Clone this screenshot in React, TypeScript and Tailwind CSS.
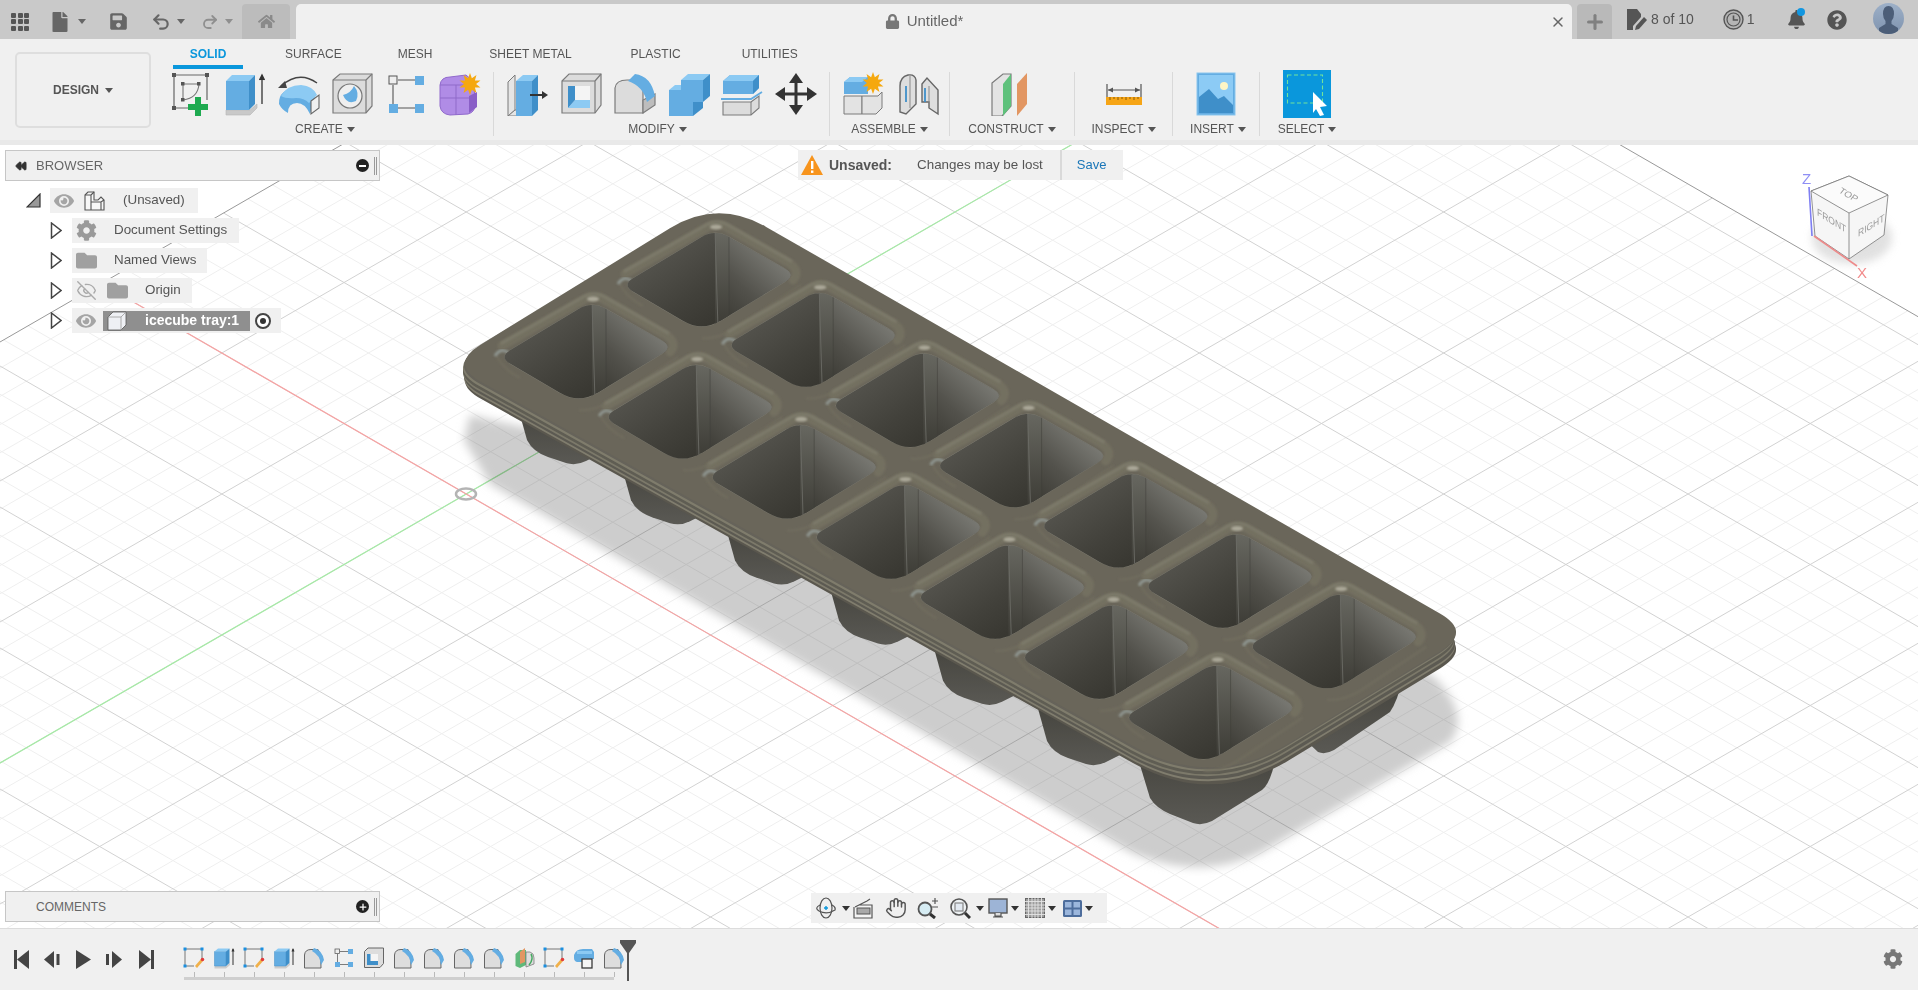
import { FaCog, FaFolder, FaEye, FaHome, FaLock, FaBell, FaQuestionCircle, FaSave, FaFile } from "react-icons/fa";
import { EyeOff, Undo2, Redo2, Hand, Plus, X, Rewind } from "lucide-react";
import type { ReactNode } from "react";

type Pt = [number, number];

const FONT = "font-['Liberation_Sans',Arial,sans-serif]";

function rounded(pts: Pt[], ds: number[]) {
  let d = "";
  pts.forEach((v, i) => {
    const prev = pts[(i + pts.length - 1) % pts.length];
    const next = pts[(i + 1) % pts.length];
    const toward = (to: Pt): Pt => {
      const len = Math.hypot(to[0] - v[0], to[1] - v[1]);
      return [v[0] + ((to[0] - v[0]) / len) * ds[i], v[1] + ((to[1] - v[1]) / len) * ds[i]];
    };
    const a = toward(prev);
    const b = toward(next);
    d += `${i === 0 ? "M" : "L"}${a[0]} ${a[1]} Q${v[0]} ${v[1]} ${b[0]} ${b[1]} `;
  });
  return d + "Z";
}

/* grid: true isometric, c+ = y + kx, c- = y - kx */
const K = 0.577;
const STEP = 28.2;
const CP_MIN = 342;
const CP_MAX = 3300;
const CM_MIN = -790;
const CM_MAX = 1000;
const pt = (cp: number, cm: number): Pt => [(cp - cm) / (2 * K), (cp + cm) / 2];

function gridLines() {
  const minor: string[] = [];
  const major: string[] = [];
  for (let n = -60; n <= 120; n++) {
    const cp = 763 + n * STEP;
    if (cp < CP_MIN - 1 || cp > CP_MAX) continue;
    const [a, b] = [pt(cp, CM_MIN), pt(cp, CM_MAX)];
    (n % 5 === 0 ? major : minor).push(`M${a[0]} ${a[1]}L${b[0]} ${b[1]}`);
  }
  for (let n = -60; n <= 60; n++) {
    const cm = 225 + n * STEP;
    if (cm < CM_MIN || cm > CM_MAX) continue;
    const [a, b] = [pt(CP_MIN, cm), pt(CP_MAX, cm)];
    (n % 5 === 0 ? major : minor).push(`M${a[0]} ${a[1]}L${b[0]} ${b[1]}`);
  }
  return { minor: minor.join(""), major: major.join("") };
}
const GRID = gridLines();

const TRAY: Pt[] = [[717.6, 199], [1472, 632], [1212, 790], [449, 364]];
const TRAY_D = [56, 37, 90, 37];
const shifted = (dy: number, dx = 0) => rounded(TRAY.map(([x, y]) => [x + dx, y + dy] as Pt), TRAY_D);
const OPENING = rounded([[0, -6], [81, 40], [-13, 97], [-93, 50]], [16, 13, 22, 13]);

const CELLS: Pt[] = [];
for (let i = 0; i < 7; i++) {
  CELLS.push([592 + i * 104.1, 307 + i * 60.1]);
  CELLS.push([715 + i * 104.2, 235 + i * 60.3]);
}

function Scene() {
  return (
    <svg className="block w-full h-full" viewBox="0 145 1918 783">
      <defs>
        <filter id="soft" x="-10%" y="-10%" width="120%" height="120%">
          <feGaussianBlur stdDeviation="5" />
        </filter>
        <filter id="soft1" x="-20%" y="-20%" width="140%" height="140%">
          <feGaussianBlur stdDeviation="1.1" />
        </filter>
        <filter id="cubeShadow" x="-30%" y="-30%" width="160%" height="160%">
          <feGaussianBlur stdDeviation="4" />
        </filter>
        <linearGradient id="wallL" gradientUnits="userSpaceOnUse" x1="-55" y1="25" x2="-5" y2="95">
          <stop offset="0" stopColor="#52514b" />
          <stop offset="0.55" stopColor="#42413b" />
          <stop offset="1" stopColor="#373630" />
        </linearGradient>
        <linearGradient id="wallR" gradientUnits="userSpaceOnUse" x1="65" y1="25" x2="5" y2="90">
          <stop offset="0" stopColor="#7a7a74" />
          <stop offset="0.5" stopColor="#53524c" />
          <stop offset="1" stopColor="#373630" />
        </linearGradient>
        <linearGradient id="fold" gradientUnits="userSpaceOnUse" x1="0" y1="0" x2="0" y2="90">
          <stop offset="0" stopColor="#66665f" />
          <stop offset="1" stopColor="#3d3c36" />
        </linearGradient>
        <linearGradient id="leg" x1="0" y1="0" x2="0" y2="1">
          <stop offset="0" stopColor="#45443e" />
          <stop offset="1" stopColor="#5a5954" />
        </linearGradient>
        <clipPath id="hole">
          <path d={OPENING} />
        </clipPath>
        <g id="cell">
          <path d="M-90 39 L-7 -8 Q2 -13 11 -8 L74 28 Q86 36 78 45" fill="none" stroke="#736f60" strokeWidth="9" strokeLinecap="round" filter="url(#soft1)" />
          <path d="M-90 36 L-7 -11 Q2 -15 11 -11 L76 26" fill="none" stroke="#7d7a6b" strokeWidth="3" strokeLinecap="round" filter="url(#soft1)" />
          <path d="M-96 48 Q-89 62 -72 71 M-13 103 Q0 105 20 94 L86 50" fill="none" stroke="#716d5e" strokeWidth="2" filter="url(#soft1)" />
          <ellipse cx="1" cy="-8" rx="6" ry="2.4" fill="#aba899" filter="url(#soft1)" />
          <path d="M-97 49 Q-92 40 -83 46" fill="none" stroke="#8e948f" strokeWidth="3" filter="url(#soft1)" />
          <path d={OPENING} fill="#3f3e39" stroke="#807f75" strokeWidth="0.8" />
          <g clipPath="url(#hole)">
            <polygon points="-100,50 0,-8 2,110 -30,110" fill="url(#wallL)" />
            <polygon points="10,-8 90,40 90,110 4,110" fill="url(#wallR)" />
            <rect x="0" y="-8" width="14" height="110" fill="url(#fold)" />
            <path d="M0 -6 L3 94" stroke="#6b6b65" strokeWidth="0.9" />
            <path d="M14 0 L14 90" stroke="#3f3e39" strokeWidth="1" opacity="0.5" />
          </g>
        </g>
        <path id="legS" d="M517 404 L527 440 Q533 452 548 457 L566 463 Q576 466 586 461 L600 454 L600 430 Z" fill="url(#leg)" />
      </defs>

      {/* grid and axes */}
      <path d={GRID.minor} stroke="#efefef" strokeWidth="1" fill="none" />
      <path d={GRID.major} stroke="#d2d2d2" strokeWidth="1" fill="none" />
      <line x1={pt(CP_MIN, CM_MIN)[0]} y1={pt(CP_MIN, CM_MIN)[1]} x2={pt(CP_MIN, CM_MAX)[0]} y2={pt(CP_MIN, CM_MAX)[1]} stroke="#999" />
      <line x1={pt(CP_MIN, CM_MIN)[0]} y1={pt(CP_MIN, CM_MIN)[1]} x2={pt(CP_MAX, CM_MIN)[0]} y2={pt(CP_MAX, CM_MIN)[1]} stroke="#999" />
      <line x1={pt(763, CM_MIN)[0]} y1={pt(763, CM_MIN)[1]} x2={pt(763, CM_MAX)[0]} y2={pt(763, CM_MAX)[1]} stroke="#a6eaa6" strokeWidth="1.2" />
      <line x1={pt(CP_MIN, 225)[0]} y1={pt(CP_MIN, 225)[1]} x2={pt(CP_MAX, 225)[0]} y2={pt(CP_MAX, 225)[1]} stroke="#f6a3a3" strokeWidth="1.2" />
      <ellipse cx="466" cy="494" rx="10" ry="5.5" fill="none" stroke="#b4b4b4" strokeWidth="2.5" />

      {/* ground shadow */}
      <path className="mix-blend-multiply" d="M470 415 L464 440 L490 484 L1130 852 Q1200 882 1262 852 L1450 742 Q1472 715 1432 675 L1100 560 Z" fill="#cdcdcd" filter="url(#soft)" />

      {/* legs */}
      <path d="M1300 735 L1318 752 Q1325 755 1334 750 L1390 712 Q1398 700 1402 680 Z" fill="url(#leg)" />
      {[0, 1, 2, 3, 4, 5].map((i) => (
        <use key={i} href="#legS" x={i * 104} y={i * 60.2} />
      ))}
      <path d="M1140 765 L1150 798 Q1156 808 1170 814 L1193 823 Q1202 826 1212 821 L1262 790 Q1272 782 1277 750 Z" fill="url(#leg)" />

      {/* rim layers */}
      <path d={shifted(17, 0)} fill="#5a574e" />
      <path d={shifted(14, -1)} fill="#807d6e" />
      <path d={shifted(12, -1)} fill="#5c5a52" />
      <path d={shifted(9, -2)} fill="#7c796a" />
      <path d={shifted(7, -2)} fill="#5f5d53" />
      <path d={shifted(4, -2)} fill="#7f7c6c" />
      <path d={shifted(2, -1)} fill="#66635a" />
      <path d={shifted(0)} fill="#6a665a" />

      {CELLS.map(([x, y], i) => (
        <use key={i} href="#cell" x={x} y={y} />
      ))}

      {/* view cube */}
      <ellipse cx="1852" cy="238" rx="40" ry="26" fill="#d4d4d4" opacity="0.7" filter="url(#cubeShadow)" />
      <polygon points="1849,176 1888,195 1884,235 1849,259 1815,236 1811,191" fill="#f6f6f6" stroke="#777" strokeWidth="0.8" />
      <polygon points="1849,176 1888,195 1849,213 1811,191" fill="#fbfbfb" stroke="#777" strokeWidth="0.8" />
      <line x1="1849" y1="213" x2="1849" y2="259" stroke="#777" strokeWidth="0.8" />
      <g fontFamily="'Liberation Sans',Arial,sans-serif" fill="#9a9a9a" fontSize="10">
        <text transform="matrix(0.85 0.5 -0.55 0.7 1838 192)">TOP</text>
        <text transform="matrix(0.85 0.52 0 1 1817 215)">FRONT</text>
        <text transform="matrix(0.85 -0.52 0 1 1858 237)">RIGHT</text>
      </g>
      <line x1="1809" y1="187" x2="1812" y2="236" stroke="#7f7ff2" strokeWidth="1.6" />
      <line x1="1814" y1="236" x2="1857" y2="266" stroke="#ee8a8a" strokeWidth="1.6" />
      <text x="1802" y="184" fontFamily="'Liberation Sans',Arial,sans-serif" fontSize="15" fill="#8f8ff5">Z</text>
      <text x="1857" y="278" fontFamily="'Liberation Sans',Arial,sans-serif" fontSize="15" fill="#f28b8b">X</text>
    </svg>
  );
}

/* ribbon icons */
function Ico({ children }: { children: ReactNode }) {
  return (
    <svg width="44" height="44" viewBox="0 0 44 44" className="shrink-0">
      {children}
    </svg>
  );
}

const STROKE = "#7b7b7b";
const BLUE = "#64ade2";
const BLUE_D = "#3f8fc9";
const BLUE_L = "#8ccaf3";
const GRAY = "#dcdcdc";

const SketchNew = () => (
  <Ico>
    <path d="M4 3H37V28M4 3V36H26" fill="none" stroke="#666" strokeWidth="1.2" />
    {[[2, 1], [35, 1], [2, 34]].map(([x, y]) => <rect key={x * 100 + y} x={x} y={y} width="4" height="4" fill="#555" />)}
    <path d="M13 12H29M13 12V28M29 12Q28 26 13 28" fill="none" stroke="#777" strokeWidth="1.1" />
    {[[11, 10], [27, 10], [11, 26]].map(([x, y]) => <rect key={x * 100 + y} x={x} y={y} width="3.5" height="3.5" fill="#555" />)}
    <path d="M31 25v7h7v6h-7v6h-6v-6h-7v-6h7v-7z" fill="#1eaa50" />
  </Ico>
);
const Extrude = () => (
  <Ico>
    <polygon points="2,38 26,38 33,32 33,36 26,43 2,43" fill="#c9c9c9" stroke="#b5b5b5" strokeWidth="0.6" />
    <polygon points="2,9 25,9 25,38 2,38" fill={BLUE} />
    <polygon points="2,9 8,3 31,3 25,9" fill={BLUE_L} />
    <polygon points="25,9 31,3 31,32 25,38" fill={BLUE_D} />
    <path d="M38 32V4M35.5 8L38 3L40.5 8" stroke="#333" strokeWidth="1.3" fill="#333" />
  </Ico>
);
const Revolve = () => (
  <Ico>
    <path d="M4 14Q22 -2 40 11" fill="none" stroke="#444" strokeWidth="1.5" />
    <polygon points="1,16 8,9 10,16" fill="#444" />
    <path d="M2 32Q1 17 22 15Q35 15 38 24L33 42Q28 31 20 31Q11 31 11 41Q5 38 2 32Z" fill={BLUE} />
    <path d="M4 24Q10 13 24 13Q36 14 40 23L32 31Q27 26 19 26Q9 27 4 24Z" fill={BLUE_L} />
    <polygon points="34,29 42,23 42,36 34,42" fill="#f0f0f0" stroke="#666" strokeWidth="1.1" />
  </Ico>
);
const Hole = () => (
  <Ico>
    <polygon points="2,8 9,2 41,2 41,34 35,41 2,41" fill={GRAY} stroke={STROKE} strokeWidth="1.2" />
    <path d="M2 8H35V41M35 8L41 2" fill="none" stroke={STROKE} strokeWidth="1.2" />
    <circle cx="19" cy="24" r="12" fill="#efefef" stroke="#777" strokeWidth="1.2" />
    <path d="M12 23Q20 21 23 14Q29 21 25 29Q16 33 12 23Z" fill={BLUE} />
  </Ico>
);
const Pattern = () => (
  <Ico>
    <rect x="4" y="4" width="8" height="8" fill="#eee" stroke="#555" />
    <rect x="30" y="4" width="9" height="9" fill={BLUE} />
    <rect x="4" y="32" width="9" height="9" fill={BLUE} />
    <rect x="30" y="32" width="9" height="9" fill={BLUE} />
    <path d="M13 8H30M8 13V32M13 36H30" stroke="#555" strokeWidth="1.1" />
  </Ico>
);
const Star = ({ cx, cy, r }: { cx: number; cy: number; r: number }) => {
  const pts = Array.from({ length: 20 }, (_, i) => {
    const rad = i % 2 === 0 ? r : r * 0.55;
    const a = (i * Math.PI) / 10;
    return `${cx + rad * Math.sin(a)},${cy - rad * Math.cos(a)}`;
  }).join(" ");
  return <polygon points={pts} fill="#f5a80e" />;
};
const BoxNew = () => (
  <Ico>
    <path d="M2 13Q3 5 12 5L28 3L36 10L37 33Q37 40 30 42L12 43Q3 42 2 34Z" fill="#b08ce6" stroke="#9069cc" strokeWidth="1" />
    <path d="M2 13H33M2 26H37M18 13V43" stroke="#8f6ac9" strokeWidth="1" fill="none" />
    <path d="M31 24L39 20V35L31 41Z" fill="#8a5fc7" />
    <Star cx={32} cy={12} r={11} />
  </Ico>
);
const PressPull = () => (
  <Ico>
    <polygon points="2,10 9,3 9,38 2,44" fill="#e5e5e5" stroke={STROKE} />
    <polygon points="2,44 9,38 14,38 14,44" fill="#e5e5e5" stroke={STROKE} />
    <polygon points="10,9 26,9 26,44 10,44" fill={BLUE} />
    <polygon points="10,9 17,3 32,3 26,9" fill={BLUE_L} />
    <polygon points="26,9 32,3 32,38 26,44" fill={BLUE_D} />
    <path d="M24 23H38" stroke="#333" strokeWidth="2" />
    <polygon points="36,19 42,23 36,27" fill="#333" />
  </Ico>
);
const Shell = () => (
  <Ico>
    <polygon points="2,9 9,2 41,2 41,33 35,41 2,41" fill={GRAY} stroke={STROKE} strokeWidth="1.2" />
    <path d="M2 9H35V41M35 9L41 2" fill="none" stroke={STROKE} strokeWidth="1.2" />
    <rect x="8" y="14" width="22" height="22" fill="#f4f4f4" />
    <polygon points="8,36 15,28 30,28 30,36" fill={BLUE_L} />
    <polygon points="8,14 15,14 15,28 8,36" fill={BLUE_D} />
  </Ico>
);
const Fillet = () => (
  <Ico>
    <path d="M2 41V16Q3 8 14 8H30V41Z" fill={GRAY} stroke={STROKE} strokeWidth="1.2" />
    <polygon points="30,41 42,33 42,22 30,28" fill="#bdbdbd" stroke={STROKE} strokeWidth="1.2" />
    <path d="M22 2Q38 4 42 24L34 30Q30 14 15 9Z" fill={BLUE} />
  </Ico>
);
const Combine = () => (
  <Ico>
    <polygon points="14,8 36,8 36,30 14,30" fill={BLUE} />
    <polygon points="14,8 21,2 43,2 36,8" fill={BLUE_L} />
    <polygon points="36,8 43,2 43,24 36,30" fill={BLUE_D} />
    <polygon points="2,18 26,18 26,44 2,44" fill={BLUE} />
    <polygon points="2,18 8,13 14,13 14,18" fill={BLUE_L} />
    <polygon points="26,30 36,30 36,36 26,44" fill={BLUE_D} />
  </Ico>
);
const SplitBody = () => (
  <Ico>
    <polygon points="2,9 9,3 38,3 38,16 32,22 2,22" fill={BLUE} />
    <polygon points="2,9 9,3 38,3 32,9" fill={BLUE_L} />
    <polygon points="32,9 38,3 38,16 32,22" fill={BLUE_D} />
    <path d="M0 27H30L41 20" stroke={BLUE} strokeWidth="1.8" fill="none" />
    <path d="M2 30H30L38 24V36L30 43H2Z" fill={GRAY} stroke={STROKE} strokeWidth="1.1" />
    <path d="M30 30V43" stroke={STROKE} />
  </Ico>
);
const MoveIco = () => (
  <Ico>
    <path d="M22 8V36M8 22H36" stroke="#333" strokeWidth="3" />
    <polygon points="22,1 29,11 15,11" fill="#333" />
    <polygon points="22,43 29,33 15,33" fill="#333" />
    <polygon points="1,22 11,15 11,29" fill="#333" />
    <polygon points="43,22 33,15 33,29" fill="#333" />
  </Ico>
);
const Assemble = () => (
  <Ico>
    <polygon points="2,10 8,5 26,5 26,22 2,22" fill={BLUE} />
    <polygon points="2,10 8,5 26,5 20,10" fill={BLUE_L} />
    <polygon points="2,24 20,24 20,42 2,42" fill="#e3e3e3" stroke={STROKE} />
    <polygon points="20,24 36,24 40,20 40,36 34,42 20,42" fill="#e3e3e3" stroke={STROKE} />
    <Star cx={31} cy={11} r={11} />
  </Ico>
);
const Joint = () => (
  <Ico>
    <path d="M4 40V14Q4 5 12 3Q19 2 20 8V32L10 42Z" fill="#dedede" stroke="#666" strokeWidth="1.4" />
    <path d="M14 4V36" stroke="#8a8a8a" />
    <path d="M26 12L31 6L42 18V42L33 36V30L26 30Z" fill="#dedede" stroke="#666" strokeWidth="1.4" />
    <path d="M33 14V36" stroke="#8a8a8a" />
    <path d="M10 14V30M29 16V30" stroke={BLUE_D} strokeWidth="1.8" />
  </Ico>
);
const Construct = () => (
  <Ico>
    <polygon points="2,11 13,2 21,2 21,34 12,44 2,44" fill="#e3e3e3" stroke={STROKE} strokeWidth="1.2" />
    <polygon points="13,12 21,2 21,34 13,44" fill="#5ec17b" />
    <polygon points="27,12 37,1 37,32 27,44" fill="#e29662" />
  </Ico>
);
const Inspect = () => (
  <svg width="36" height="22" viewBox="0 0 36 22" className="shrink-0">
    <path d="M1 1V14M35 1V14M2 7H34" stroke="#555" strokeWidth="1.2" fill="none" />
    <polygon points="2,7 7,4.500 7,9.500" fill="#555" />
    <polygon points="34,7 29,4.500 29,9.500" fill="#555" />
    <rect x="0" y="14" width="36" height="8" fill="#f6a516" />
    <path d="M4 14v3M8 14v2M12 14v3M16 14v2M20 14v3M24 14v2M28 14v3M32 14v2" stroke="#8a5a05" />
  </svg>
);
const Insert = () => (
  <Ico>
    <rect x="3" y="1" width="38" height="42" fill={BLUE} stroke="#8ac6ee" />
    <rect x="5" y="3" width="34" height="38" fill="#8ccbf5" />
    <circle cx="30" cy="14" r="4" fill="#fdf5c5" />
    <path d="M5 36V25L15 17L24 27L30 24L39 33V41H5Z" fill={BLUE_D} />
  </Ico>
);
const SelectIco = () => (
  <svg width="48" height="48" viewBox="0 0 48 48" className="shrink-0">
    <rect width="48" height="48" fill="#0a97dc" />
    <rect x="4.5" y="5" width="35" height="28" fill="none" stroke="#72e39a" strokeWidth="1.1" strokeDasharray="4 2.5" />
    <polygon points="30,22 44,36 37,37 41,45 37,46 33,39 30,43" fill="#fff" />
  </svg>
);

const Caret = ({ c = "#555" }: { c?: string }) => (
  <svg width="8" height="5" viewBox="0 0 8 5" className="shrink-0">
    <polygon points="0,0 8,0 4,5" fill={c} />
  </svg>
);

function Group({ w, icons, label, labelPad = "" }: { w: string; icons: ReactNode; label: string; labelPad?: string }) {
  return (
    <div className={`${w} flex flex-col shrink-0`}>
      <div className="h-[48px] flex items-center justify-center">{icons}</div>
      <div className={`mt-[4px] h-[14px] flex items-center justify-center gap-[4px] text-[12px] text-[#555] ${labelPad}`}>
        {label}
        <Caret />
      </div>
    </div>
  );
}

const Cell = ({ children }: { children: ReactNode }) => (
  <div className="w-[53.7px] flex justify-center shrink-0">{children}</div>
);
const Sep = () => <div className="w-px h-[64px] mt-[2px] bg-[#d9d9d9] shrink-0" />;

function Triangle({ open = false }: { open?: boolean }) {
  return open ? (
    <svg width="15" height="15" viewBox="0 0 15 15">
      <polygon points="1,14 14,14 14,1" fill="#999" stroke="#333" strokeWidth="1.2" />
    </svg>
  ) : (
    <svg width="12" height="17" viewBox="0 0 12 17">
      <polygon points="1.5,1 11,8.5 1.5,16" fill="#fff" stroke="#444" strokeWidth="1.5" />
    </svg>
  );
}

const CompIcon = () => (
  <svg width="21" height="20" viewBox="0 0 21 20">
    <path d="M1 4L4 1H10V9H14L17 6L20 9V19H1Z" fill="#f7f7f7" stroke="#555" strokeWidth="1.1" />
    <path d="M1 4H7V19M7 4L10 1M7 11H17L20 9M17 11V19" fill="none" stroke="#555" strokeWidth="1.1" />
  </svg>
);
const CubeIcon = () => (
  <svg width="20" height="20" viewBox="0 0 20 20">
    <polygon points="1,6 6,1 19,1 19,14 14,19 1,19" fill="#eef0f4" stroke="#555" strokeWidth="0.8" />
    <path d="M1 6H14V19M14 6L19 1" fill="none" stroke="#999" strokeWidth="0.8" />
  </svg>
);
const DocEdit = () => (
  <svg width="20" height="21" viewBox="0 0 20 21" className="ml-[15px] self-center -mt-[4px] shrink-0">
    <path d="M0 0H10L14 5V8L6 17V21H0Z" fill="#555" />
    <path d="M9 17L17 8L20 11L12 20L8 21Z" fill="#555" />
  </svg>
);

function Chip({ ml, children }: { ml: string; children: ReactNode }) {
  return <div className={`${ml} h-[25px] flex items-center bg-[#f0f0f0] text-[13.4px] text-[#555]`}>{children}</div>;
}

function PanelHead({ title, plus, chevrons }: { title: string; plus?: boolean; chevrons?: boolean }) {
  return (
    <div className="w-[375px] h-[31px] flex items-center border border-[#c6c6c6] bg-[#f0f0f0] text-[#666]">
      <div className="w-[30px] flex justify-center">{chevrons && <Rewind size={12} fill="#333" stroke="#333" />}</div>
      <span className={title === "BROWSER" ? "text-[13px]" : "text-[12px]"}>{title}</span>
      <span className="ml-auto mr-[5px] w-[13px] h-[13px] rounded-full bg-[#222] flex items-center justify-center">
        {plus ? <Plus size={10} strokeWidth={3} color="#fff" /> : <span className="w-[7px] h-[2px] bg-white" />}
      </span>
      <span className="mr-[2px] w-[3px] h-[18px] border-x border-[#999]" />
    </div>
  );
}

/* timeline glyphs */
const Mini = ({ c }: { c: ReactNode }) => (
  <div className="w-[30px] h-[22px] flex justify-center items-center">
    <svg width="22" height="22" viewBox="0 0 44 44">{c}</svg>
  </div>
);
const mSketch = (
  <>
    <path d="M4 4H38V24M4 4V38H22" fill="none" stroke="#777" strokeWidth="2" />
    {[[1, 1], [35, 1], [1, 35]].map(([x, y]) => <rect key={x * 100 + y} x={x} y={y} width="6" height="6" fill="#1b8fe0" />)}
    <path d="M24 38L36 24L40 28L28 42Z" fill="#f0b04a" />
    <circle cx="39" cy="25" r="3.5" fill="#e23b3b" />
  </>
);
const mExtrude = (
  <>
    <polygon points="3,38 26,38 34,32 34,36 26,43 3,43" fill="#ccc" />
    <polygon points="3,9 26,9 26,38 3,38" fill={BLUE} stroke={BLUE_D} />
    <polygon points="3,9 10,3 33,3 26,9" fill={BLUE_L} />
    <polygon points="26,9 33,3 33,32 26,38" fill={BLUE_D} />
    <path d="M40 36V4" stroke="#333" strokeWidth="2" />
    <polygon points="37,9 40,2 43,9" fill="#333" />
  </>
);
const mFillet = (
  <>
    <path d="M3 42V16Q4 5 16 5H30Q36 14 36 42Z" fill="#ddd" stroke="#666" strokeWidth="2" />
    <path d="M22 2Q38 6 42 26L36 36Q34 16 18 8Z" fill={BLUE} />
  </>
);
const mPattern = (
  <>
    <rect x="4" y="4" width="9" height="9" fill="#eee" stroke="#555" strokeWidth="1.5" />
    <rect x="30" y="4" width="10" height="10" fill={BLUE} />
    <rect x="4" y="30" width="10" height="10" fill={BLUE} />
    <rect x="30" y="30" width="10" height="10" fill={BLUE} />
    <path d="M14 9H30M9 14V30M14 35H30" stroke="#555" strokeWidth="1.5" />
  </>
);
const mShell = (
  <>
    <polygon points="3,9 10,2 41,2 41,33 34,41 3,41" fill="#ddd" stroke="#666" strokeWidth="2" />
    <rect x="8" y="14" width="22" height="22" fill="#f5f5f5" />
    <polygon points="8,14 15,14 15,28 30,28 30,36 8,36" fill={BLUE_D} />
  </>
);
const mPlane = (
  <>
    <path d="M5 38V14L14 6H26V36L14 42Z" fill="#4fb26d" opacity="0.9" />
    <path d="M14 34V10L24 2V30Z" fill="#e29662" />
    <path d="M26 10H34Q42 12 42 22V34L26 40Z" fill="#ddd" stroke="#777" strokeWidth="1.5" />
    <path d="M36 14Q42 24 32 36" fill="none" stroke="#43a95f" strokeWidth="3" />
  </>
);
const mSplit = (
  <>
    <path d="M2 16Q6 4 20 4H38L42 10V24H24V30H8Q2 28 2 22Z" fill={BLUE} />
    <path d="M8 8H38V14H8Z" fill={BLUE_L} />
    <rect x="18" y="24" width="20" height="18" fill="#f5f5f5" stroke="#333" strokeWidth="2.5" />
  </>
);
const TIMELINE = [mSketch, mExtrude, mSketch, mExtrude, mFillet, mPattern, mShell, mFillet, mFillet, mFillet, mFillet, mPlane, mSketch, mSplit, mFillet];

/* navigation bar glyphs */
const Orbit = () => (
  <svg width="21" height="22" viewBox="0 0 21 22">
    <ellipse cx="11" cy="11" rx="6" ry="10" fill="none" stroke="#555" strokeWidth="1.2" />
    <path d="M5 8Q-1 11 4 14Q12 18 20 13Q21 10 17 8" fill="none" stroke="#555" strokeWidth="1.2" />
    <path d="M9 11h4M11 9v4" stroke="#0a97dc" strokeWidth="1.4" />
  </svg>
);
const Capture = () => (
  <svg width="21" height="21" viewBox="0 0 21 21">
    <path d="M2 9L14 3L17 1M6 7H19V20H1V9" fill="#f4f4f4" stroke="#555" strokeWidth="1.2" />
    <rect x="4" y="10" width="13" height="6" fill="#a9a9a9" stroke="#555" strokeWidth="1" />
  </svg>
);
const ZoomPm = () => (
  <svg width="22" height="22" viewBox="0 0 22 22">
    <circle cx="8" cy="12" r="6.5" fill="#d6ecf3" stroke="#555" strokeWidth="1.8" />
    <path d="M13 17L18 21" stroke="#333" strokeWidth="3" />
    <path d="M15 4h6M18 1v6M15 10h6" stroke="#555" strokeWidth="1.2" />
  </svg>
);
const ZoomFit = () => (
  <svg width="21" height="21" viewBox="0 0 21 21">
    <circle cx="9" cy="9" r="8" fill="#eef2f4" stroke="#555" strokeWidth="1.6" />
    <rect x="5" y="5" width="8" height="8" fill="#e3eaf2" stroke="#888" strokeWidth="1.2" />
    <path d="M15 15L20 20" stroke="#333" strokeWidth="3" />
  </svg>
);
const Display = () => (
  <svg width="20" height="20" viewBox="0 0 20 20">
    <rect x="1" y="1" width="18" height="14" fill="#9db4d6" stroke="#555" strokeWidth="1.4" />
    <path d="M7 15V18H13V15M5 19H15" stroke="#555" strokeWidth="1.2" fill="#ddd" />
  </svg>
);
const GridIco = () => (
  <svg width="20" height="20" viewBox="0 0 20 20">
    <rect x="0.5" y="0.5" width="19" height="19" fill="#9c9c9c" stroke="#666" />
    <path d="M3.5 0V20M7 0V20M10 0V20M13 0V20M16.5 0V20M0 3.5H20M0 7H20M0 10H20M0 13H20M0 16.5H20" stroke="#e4e4e4" strokeWidth="0.9" />
  </svg>
);
const Views = () => (
  <svg width="19" height="17" viewBox="0 0 19 17">
    <rect width="19" height="17" rx="1.5" fill="#4d6d9c" />
    <rect x="2" y="2" width="6.5" height="5.5" fill="#9bb6dc" />
    <rect x="10.5" y="2" width="6.5" height="5.5" fill="#9bb6dc" />
    <rect x="2" y="9.5" width="6.5" height="5.5" fill="#9bb6dc" />
    <rect x="10.5" y="9.5" width="6.5" height="5.5" fill="#9bb6dc" />
  </svg>
);

export default function App() {
  return (
    <div className={`${FONT} w-[1918px] h-[990px] flex flex-col overflow-hidden bg-white text-[#555]`}>
      {/* title bar */}
      <div className="h-[39px] pt-[4px] flex items-stretch bg-[#c9c9c9] shrink-0">
        <div className="ml-[11px] w-[18px] self-center grid grid-cols-3 gap-[1.5px]">
          {Array.from({ length: 9 }, (_, i) => <span key={i} className="h-[5px] bg-[#555] rounded-[1px]" />)}
        </div>
        <FaFile size={20} color="#666" className="ml-[21px] self-center" />
        <span className="ml-[8px] self-center"><Caret c="#666" /></span>
        <FaSave size={19} color="#666" className="ml-[23px] self-center" />
        <Undo2 size={20} color="#666" strokeWidth={2.6} className="ml-[23px] self-center" />
        <span className="ml-[6px] self-center"><Caret c="#666" /></span>
        <Redo2 size={18} color="#8f8f8f" strokeWidth={2.4} className="ml-[16px] self-center" />
        <span className="ml-[6px] self-center"><Caret c="#8f8f8f" /></span>
        <div className="ml-[9px] w-[48px] bg-[#bcbcbc] rounded-t-[4px] flex items-center justify-center">
          <FaHome size={17} color="#8a8a8a" />
        </div>
        <div className="ml-[6px] w-[1276px] bg-[#f0f0f0] rounded-t-[5px] flex items-center">
          <div className="flex-1 pl-[2px] flex items-center justify-center gap-[7px]">
            <FaLock size={15} color="#777" />
            <span className="text-[15px] text-[#666]">Untitled*</span>
          </div>
          <X size={16} color="#666" strokeWidth={2.2} className="mr-[6px]" />
        </div>
        <div className="ml-[5px] w-[35px] bg-[#b9b9b9] rounded-t-[4px] flex items-center justify-center">
          <Plus size={22} color="#808080" strokeWidth={3.4} />
        </div>
        <DocEdit />
        <span className="ml-[4px] self-center -mt-[4px] text-[14px]">8 of 10</span>
        <svg width="21" height="21" viewBox="0 0 21 21" className="ml-[29px] self-center -mt-[4px]">
          <circle cx="10.5" cy="10.5" r="9.5" fill="#b5b5b5" stroke="#555" strokeWidth="1.4" />
          <circle cx="10.5" cy="10.5" r="6.5" fill="none" stroke="#555" strokeWidth="1.2" />
          <path d="M10.5 6.5V11H15" fill="none" stroke="#555" strokeWidth="1.6" />
        </svg>
        <span className="ml-[3px] self-center -mt-[4px] text-[14px]">1</span>
        <span className="ml-[32px] self-center -mt-[4px] relative">
          <FaBell size={19} color="#555" />
          <span className="absolute -top-[2px] left-[10px] w-[8px] h-[8px] rounded-full bg-[#1296e0]" />
        </span>
        <FaQuestionCircle size={20} color="#555" className="ml-[21px] self-center -mt-[4px]" />
        <div className="ml-[26px] w-[31px] h-[31px] -mt-[1px] rounded-full bg-gradient-to-b from-[#9db0c8] to-[#7f93ae] overflow-hidden flex justify-center">
          <svg width="31" height="31" viewBox="0 0 31 31">
            <path d="M10 11Q10 3 15.5 3Q21 3 21 11Q21 15 18.5 18V21L25 25V31H6V25L12.500 21V18Q10 15 10 11Z" fill="#4c5e78" />
          </svg>
        </div>
      </div>

      {/* ribbon */}
      <div className="h-[106px] flex bg-[#f0f0f0] border-b-[5px] border-[#e9e9e9] shrink-0">
        <div className="ml-[15px] mt-[13px] w-[136px] h-[76px] border-2 border-[#dedede] rounded-[5px] flex items-center justify-center gap-[6px] text-[12px] font-bold text-[#555]">
          DESIGN
          <Caret />
        </div>
        <div className="ml-[14px] flex-1 flex flex-col">
          <div className="relative h-[31px] text-[12px] text-[#555]">
            <div className="flex items-center h-[28px] pt-[1px]">
              <div className="w-[70px] ml-[8px] text-center text-[#0a97dc] font-bold">SOLID</div>
              <div className="ml-[42px]">SURFACE</div>
              <div className="ml-[56px]">MESH</div>
              <div className="ml-[57px]">SHEET METAL</div>
              <div className="ml-[59px]">PLASTIC</div>
              <div className="ml-[61px]">UTILITIES</div>
            </div>
            <div className="ml-[8px] w-[70px] h-[4px] -mt-[2px] bg-[#0a97dc]" />
          </div>
          <div className="flex">
            <Group
              w="w-[328px]"
              labelPad="pr-[8px]"
              label="CREATE"
              icons={<div className="flex w-full"><Cell><SketchNew /></Cell><Cell><Extrude /></Cell><Cell><Revolve /></Cell><Cell><Hole /></Cell><Cell><Pattern /></Cell><Cell><BoxNew /></Cell></div>}
            />
            <Sep />
            <Group
              w="w-[335px]"
              label="MODIFY"
              labelPad="pr-[8px]"
              icons={<div className="flex w-full pl-[7px]"><Cell><PressPull /></Cell><Cell><Shell /></Cell><Cell><Fillet /></Cell><Cell><Combine /></Cell><Cell><SplitBody /></Cell><Cell><MoveIco /></Cell></div>}
            />
            <Sep />
            <Group
              w="w-[119px]"
              label="ASSEMBLE"
              icons={<div className="flex w-full pl-[7px]"><Cell><Assemble /></Cell><Cell><Joint /></Cell></div>}
            />
            <Sep />
            <Group w="w-[124px]" label="CONSTRUCT" icons={<Construct />} />
            <Sep />
            <Group w="w-[97px]" label="INSPECT" icons={<Inspect />} />
            <Sep />
            <Group w="w-[86px]" labelPad="pl-[4px]" label="INSERT" icons={<Insert />} />
            <Sep />
            <Group w="w-[94px]" label="SELECT" icons={<SelectIco />} />
          </div>
        </div>
      </div>

      {/* canvas */}
      <div className="relative flex-1 min-h-0 overflow-hidden">
        <Scene />

        <div className="absolute left-[5px] top-[5px] flex flex-col gap-[5px]">
          <div className="mb-[2px]"><PanelHead title="BROWSER" chevrons /></div>
          <div className="flex items-center">
            <span className="ml-[21px] flex"><Triangle open /></span>
            <Chip ml="ml-[9px]">
              <FaEye size={20} color="#a5a5a5" className="ml-[4px]" />
              <span className="ml-[10px] flex"><CompIcon /></span>
              <span className="ml-[18px] mr-[13px]">(Unsaved)</span>
            </Chip>
          </div>
          <div className="flex items-center">
            <span className="ml-[45px] flex"><Triangle /></span>
            <Chip ml="ml-[10px]">
              <FaCog size={21} color="#9a9a9a" className="ml-[4px]" />
              <span className="ml-[17px] mr-[12px]">Document Settings</span>
            </Chip>
          </div>
          <div className="flex items-center">
            <span className="ml-[45px] flex"><Triangle /></span>
            <Chip ml="ml-[10px]">
              <FaFolder size={21} color="#a0a0a0" className="ml-[4px]" />
              <span className="ml-[17px] mr-[11px]">Named Views</span>
            </Chip>
          </div>
          <div className="flex items-center">
            <span className="ml-[45px] flex"><Triangle /></span>
            <Chip ml="ml-[10px]">
              <EyeOff size={21} color="#aaa" strokeWidth={1.6} className="ml-[4px]" />
              <FaFolder size={21} color="#a0a0a0" className="ml-[10px]" />
              <span className="ml-[17px] mr-[11px]">Origin</span>
            </Chip>
          </div>
          <div className="flex items-center">
            <span className="ml-[45px] flex"><Triangle /></span>
            <Chip ml="ml-[10px]">
              <FaEye size={20} color="#a5a5a5" className="ml-[4px]" />
              <div className="ml-[7px] w-[147px] h-[20px] flex items-center bg-[#8f8f8f] text-white font-bold text-[14px]">
                <span className="ml-[4px] flex"><CubeIcon /></span>
                <span className="ml-[18px] whitespace-nowrap">icecube tray:1</span>
              </div>
              <span className="ml-[5px] mr-[10px] w-[16px] h-[16px] rounded-full border-2 border-[#444] bg-white flex items-center justify-center">
                <span className="w-[6px] h-[6px] rounded-full bg-[#333]" />
              </span>
            </Chip>
          </div>
        </div>

        <div className="absolute left-[798px] top-[5px] w-[325px] h-[30px] flex items-center bg-[#f0f0f0] text-[13.4px]">
          <svg width="22" height="20" viewBox="0 0 22 20" className="ml-[3px]">
            <polygon points="11,0 22,20 0,20" fill="#f7941d" />
            <rect x="10" y="6" width="2.4" height="8" fill="#fff" />
            <rect x="10" y="15.500" width="2.4" height="2.4" fill="#fff" />
          </svg>
          <span className="ml-[6px] font-bold text-[14px]">Unsaved:</span>
          <span className="ml-[25px]">Changes may be lost</span>
          <span className="ml-[17px] w-[2px] h-[30px] bg-[#d9d9d9]" />
          <span className="ml-[15px] text-[#1a76b8] text-[13px]">Save</span>
        </div>

        <div className="absolute left-[5px] bottom-[6px]">
          <PanelHead title="COMMENTS" plus />
        </div>

        <div className="absolute left-[811px] bottom-[5px] w-[296px] h-[30px] flex items-center bg-[#f0f0f0]">
          <span className="ml-[4px] flex"><Orbit /></span>
          <span className="ml-[6px]"><Caret c="#333" /></span>
          <span className="ml-[3px] flex"><Capture /></span>
          <Hand size={22} color="#555" strokeWidth={1.6} className="ml-[11px]" />
          <span className="ml-[10px] flex"><ZoomPm /></span>
          <span className="ml-[11px] flex"><ZoomFit /></span>
          <span className="ml-[5px]"><Caret c="#333" /></span>
          <span className="ml-[4px] flex"><Display /></span>
          <span className="ml-[3px]"><Caret c="#333" /></span>
          <span className="ml-[6px] flex"><GridIco /></span>
          <span className="ml-[3px]"><Caret c="#333" /></span>
          <span className="ml-[7px] flex"><Views /></span>
          <span className="ml-[3px]"><Caret c="#333" /></span>
        </div>
      </div>

      {/* timeline */}
      <div className="h-[62px] relative flex bg-[#f0f0f0] border-t border-[#dcdcdc] shrink-0">
        <div className="ml-[14px] mt-[21px] h-[19px] flex items-center">
          <svg width="15" height="19" viewBox="0 0 15 19"><rect width="3" height="19" fill="#444" /><polygon points="15,0 15,19 3,9.500" fill="#444" /></svg>
          <svg width="16" height="17" viewBox="0 0 16 17" className="ml-[15px]"><polygon points="10,0 10,17 0,8.500" fill="#444" /><rect x="12.500" y="3" width="3" height="11" fill="#444" /></svg>
          <svg width="15" height="19" viewBox="0 0 15 19" className="ml-[16px]"><polygon points="0,0 15,9.500 0,19" fill="#444" /></svg>
          <svg width="16" height="17" viewBox="0 0 16 17" className="ml-[15px]"><rect y="3" width="3" height="11" fill="#444" /><polygon points="6,0 16,8.500 6,17" fill="#444" /></svg>
          <svg width="15" height="19" viewBox="0 0 15 19" className="ml-[17px]"><polygon points="0,0 12,9.500 0,19" fill="#444" /><rect x="12" width="3" height="19" fill="#444" /></svg>
        </div>
        <div className="ml-[25px] pt-[18px] flex flex-col">
          <div className="flex">
            {TIMELINE.map((c, i) => (
              <div key={i} className="w-[30px] flex flex-col items-center">
                <Mini c={c} />
                <span className="mt-[3px] w-px h-[5px] bg-[#b9b9b9]" />
              </div>
            ))}
          </div>
          <div className="ml-[5px] w-[430px] h-[3px] bg-[#cfcfcf]" />
        </div>
        <svg width="16" height="41" viewBox="0 0 16 41" className="absolute left-[620px] top-[11px]">
          <polygon points="0,0 16,0 16,3 9,13 9,41 7,41 7,13 0,3" fill="#555" />
        </svg>
        <FaCog size={20} color="#777" className="ml-auto mr-[15px] mt-[20px]" />
      </div>
    </div>
  );
}
